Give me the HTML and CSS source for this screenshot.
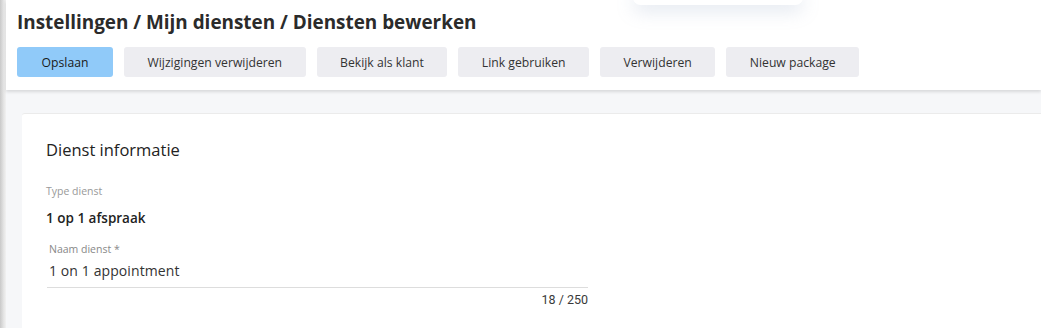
FILE: index.html
```
<!DOCTYPE html>
<html lang="nl">
<head>
    <meta charset="UTF-8">
    <meta name="viewport" content="width=device-width, initial-scale=1.0">
    <title>Diensten bewerken</title>
    <link rel="stylesheet" href="styles.css">
</head>
<body>
    <div class="rail"></div>
    <div class="main">
        <div class="header">
            <h1>Instellingen / Mijn diensten / Diensten bewerken</h1>
            <div class="toolbar">
                <button class="btn btn-primary">Opslaan</button>
                <button class="btn">Wijzigingen verwijderen</button>
                <button class="btn">Bekijk als klant</button>
                <button class="btn">Link gebruiken</button>
                <button class="btn">Verwijderen</button>
                <button class="btn">Nieuw package</button>
            </div>
            <div class="toast"></div>
        </div>
        <div class="content">
            <div class="card">
                <h2>Dienst informatie</h2>
                <div class="field-static">
                    <span class="field-label">Type dienst</span>
                    <span class="field-value">1 op 1 afspraak</span>
                </div>
                <div class="field-input">
                    <label for="naam">Naam dienst *</label>
                    <input type="text" id="naam" value="1 on 1 appointment">
                    <div class="counter">18 / 250</div>
                </div>
            </div>
        </div>
    </div>
</body>
</html>
```

FILE: styles.css
```
body { margin: 0; display: flex; height: 328px; font-family: "Open Sans", Arial, sans-serif; background-color: #f6f7f9; color: #222; overflow: hidden; }
.rail { width: 6px; flex-shrink: 0; background: linear-gradient(to right, #c9c9c9, #e4e4e4 60%, #f2f2f2); }
.main { flex: 1; display: flex; flex-direction: column; }
.header { position: relative; background: white; padding: 9px 11px 13px; box-shadow: 0 2px 3px rgba(0,0,0,0.12); z-index: 1; }
.header h1 { margin: 0; font-family: "Open Sans", sans-serif; font-weight: 700; font-size: 18.9px; line-height: 26px; color: #2b2b2b; }
.toolbar { display: flex; gap: 11px; margin-top: 12px; }
.btn { height: 30px; border: none; border-radius: 3px; background-color: #ededf1; color: #333; font-family: "Open Sans", sans-serif; font-size: 12.2px; padding: 0 23.5px; cursor: pointer; }
.btn-primary { background-color: #90caf9; color: #1a1a1a; width: 96px; }
.toast { position: absolute; left: 627px; top: -10px; width: 170px; height: 15px; background: white; border-radius: 8px; box-shadow: 0 6px 18px rgba(140,160,190,0.25); }
.content { flex: 1; padding: 23px 0 0 16px; }
.card { height: 100%; box-sizing: border-box; background: white; border-top: 1px solid #ebebeb; border-radius: 3px 0 0 0; padding: 24px 0 0 24px; }
h2 { margin: 0; font-size: 16.5px; font-weight: 500; color: #222; line-height: 24px; }
.field-static { margin-top: 22px; display: flex; flex-direction: column; }
.field-label { font-size: 10.5px; color: #999; line-height: 14px; }
.field-value { font-size: 13.5px; font-weight: 600; color: #222; margin-top: 11px; line-height: 19px; }
.field-input { margin-top: 14px; width: 541px; padding-left: 1px; }
.field-input label { display: block; font-size: 10.5px; color: #888; padding-left: 2px; line-height: 14px; }
.field-input input { display: block; width: 100%; box-sizing: border-box; border: none; border-bottom: 1px solid #ddd; font-family: "Open Sans", sans-serif; font-size: 14px; letter-spacing: 0.1px; color: #333; padding: 5px 2px 7px; outline: none; }
.counter { text-align: right; font-family: Roboto, sans-serif; font-size: 12.5px; color: #3a3a3a; margin-top: 4px; }
```
